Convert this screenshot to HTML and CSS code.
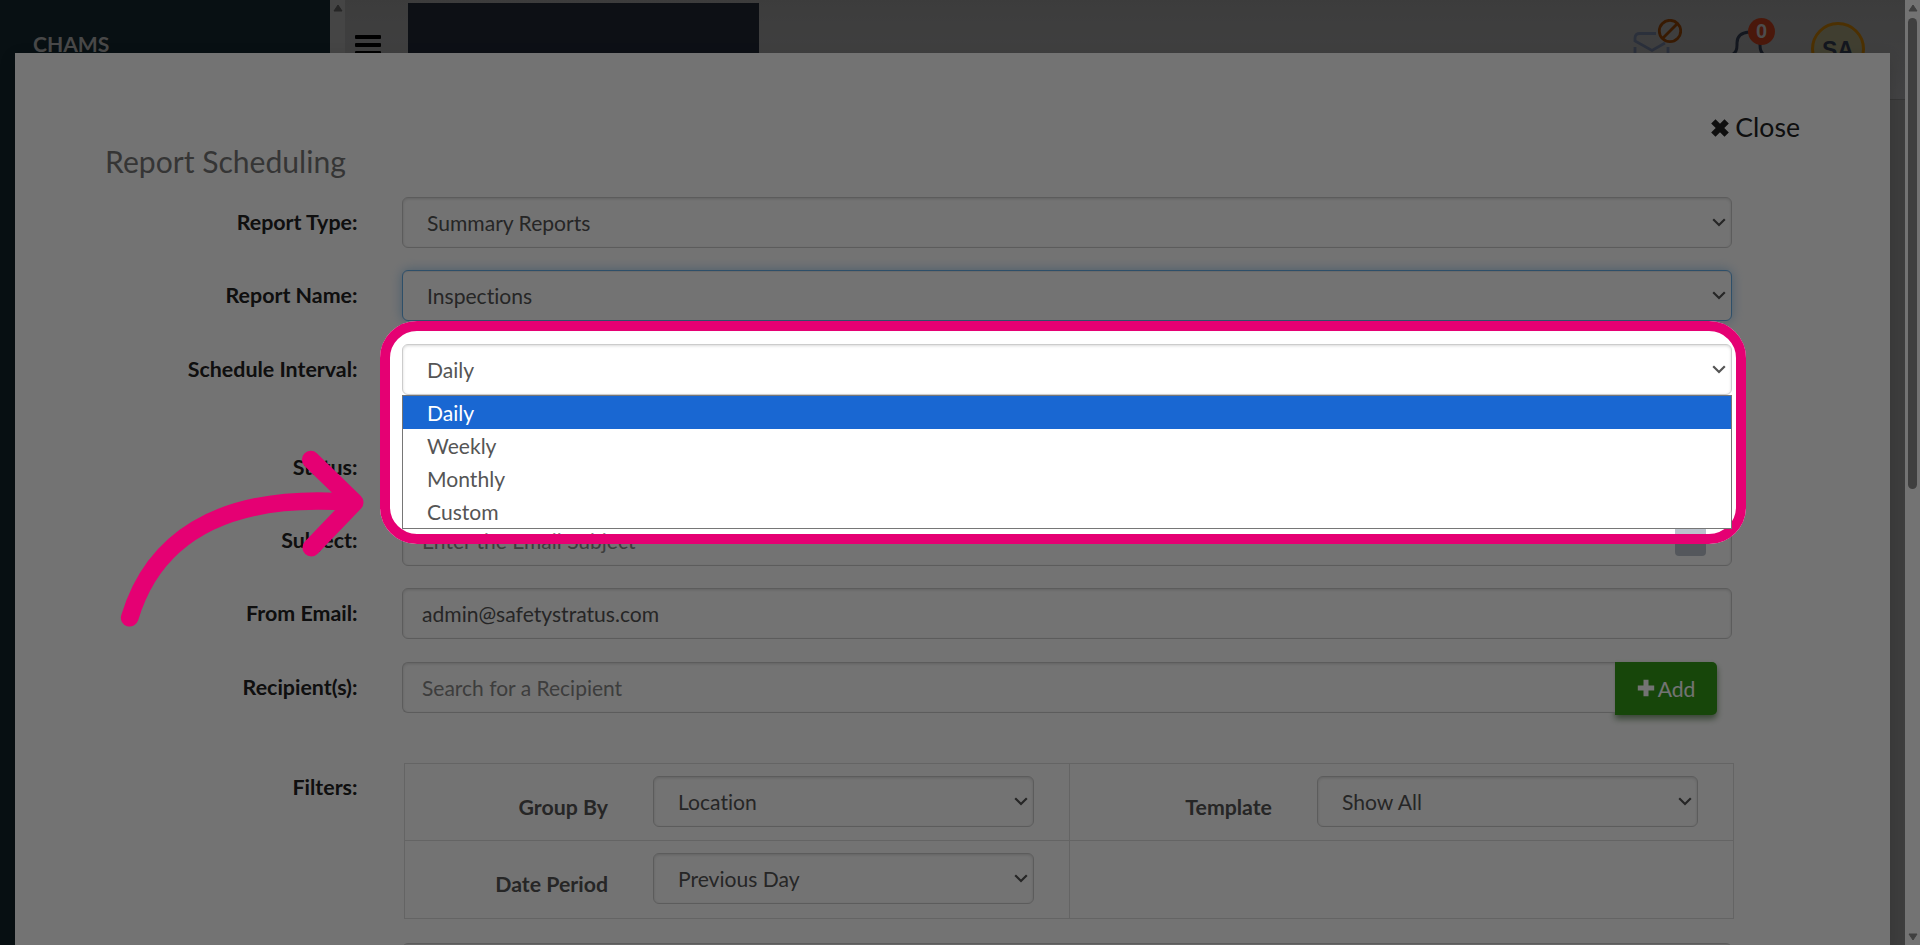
FILE: index.html
```
<!DOCTYPE html>
<html lang="en">
<head>
    <meta charset="UTF-8">
    <meta name="viewport" content="width=device-width, initial-scale=1.0">
    <title>Report Scheduling</title>
    <link rel="stylesheet" href="styles.css">
</head>
<body>
    <div class="page">
        <div class="sidebar">CHAMS</div>
        <div class="side-scroll">
            <svg class="scroll-arrow" viewBox="0 0 10 8"><path d="M5 1L9 7H1Z" /></svg>
        </div>
        <div class="topbar">
            <div class="menu-icon"><span></span><span></span><span></span></div>
            <div class="logo"></div>
            <div class="top-icons">
                <svg class="icon-mail" viewBox="0 0 50 50" fill="none">
                    <path d="M24 14.5H8Q3 14.5 3 19V22L20 31.5L33 24M3 28V45M36 28V45" stroke="#5f6a84" stroke-width="2.8" />
                    <circle cx="38" cy="12" r="10.7" stroke="#7d3a06" stroke-width="2.8" />
                    <path d="M30.5 19.5L45.5 4.5" stroke="#7d3a06" stroke-width="2.8" />
                </svg>
                <div class="bell">
                    <svg viewBox="0 0 36 40" fill="none">
                        <path d="M2 35Q6 33 6 26V24Q6 14 18 13Q28 14 29 24V26Q29 33 33 36" stroke="#2b3345" stroke-width="3" />
                    </svg>
                    <span class="badge">0</span>
                </div>
                <div class="avatar">SA</div>
            </div>
        </div>
        <div class="page-scroll">
            <svg class="scroll-arrow" viewBox="0 0 10 8"><path d="M5 1L9 7H1Z" /></svg>
            <div class="thumb"></div>
            <svg class="scroll-arrow" viewBox="0 0 10 8"><path d="M5 7L9 1H1Z" /></svg>
        </div>
    </div>

    <div class="modal">
        <div class="close">
            <svg class="icon-x" viewBox="0 0 18 18"><path d="M3 3L15 15M15 3L3 15" /></svg>
            Close
        </div>
        <h1 class="title">Report Scheduling</h1>

        <div class="row">
            <label class="label">Report Type:</label>
            <div class="field select">Summary Reports<svg class="chevron" viewBox="0 0 14 9"><path d="M1.2 1.2L7 7L12.8 1.2" /></svg></div>
        </div>
        <div class="row">
            <label class="label">Report Name:</label>
            <div class="field select focused">Inspections<svg class="chevron" viewBox="0 0 14 9"><path d="M1.2 1.2L7 7L12.8 1.2" /></svg></div>
        </div>
        <div class="row row-interval">
            <label class="label">Schedule Interval:</label>
            <div class="field select">Daily<svg class="chevron" viewBox="0 0 14 9"><path d="M1.2 1.2L7 7L12.8 1.2" /></svg>
                <ul class="options">
                    <li class="active">Daily</li>
                    <li>Weekly</li>
                    <li>Monthly</li>
                    <li>Custom</li>
                </ul>
            </div>
        </div>
        <div class="row">
            <label class="label">Status:</label>
        </div>
        <div class="row">
            <label class="label">Subject:</label>
            <div class="field placeholder">Enter the Email Subject<span class="field-button"></span></div>
        </div>
        <div class="row">
            <label class="label">From Email:</label>
            <div class="field">admin@safetystratus.com</div>
        </div>
        <div class="row row-recipients">
            <label class="label">Recipient(s):</label>
            <div class="field placeholder recipient">Search for a Recipient</div>
            <div class="add-btn">
                <svg class="icon-plus" viewBox="0 0 18 18"><path d="M9 0.8V17.2M0.8 9H17.2" /></svg>
                Add
            </div>
        </div>
        <div class="row row-filters">
            <label class="label">Filters:</label>
            <div class="filters">
                <div class="cell">
                    <label class="filter-label">Group By</label>
                    <div class="field select">Location<svg class="chevron" viewBox="0 0 14 9"><path d="M1.2 1.2L7 7L12.8 1.2" /></svg></div>
                </div>
                <div class="cell cell-right">
                    <label class="filter-label">Template</label>
                    <div class="field select">Show All<svg class="chevron" viewBox="0 0 14 9"><path d="M1.2 1.2L7 7L12.8 1.2" /></svg></div>
                </div>
                <div class="cell">
                    <label class="filter-label">Date Period</label>
                    <div class="field select">Previous Day<svg class="chevron" viewBox="0 0 14 9"><path d="M1.2 1.2L7 7L12.8 1.2" /></svg></div>
                </div>
                <div class="cell cell-right"></div>
            </div>
        </div>
        <div class="row row-last">
            <div class="field"></div>
        </div>
    </div>

    <!-- highlight and arrow over the dimmed page -->
    <div class="spotlight"></div>
    <svg class="arrow" viewBox="0 0 260 190">
        <path d="M19.7 172.7C41 102 101 46 244 57.5M200.7 14.7L244.7 57.3L201.3 102.7" />
    </svg>
</body>
</html>
```
FILE: styles.css
```
* {
    box-sizing: border-box;
}

body {
    margin: 0;
    height: 945px;
    overflow: hidden;
    position: relative;
    font-family: "Lato", sans-serif;
    font-size: 21.1px;
    font-variant-ligatures: none;
    color: #555;
}

.page {
    display: flex;
    height: 945px;
    background: #888;
}

.sidebar {
    width: 330px;
    padding: 31px 0 0 33px;
    background: #12242a;
    color: #a0a0a0;
    font-weight: bold;
    line-height: 26px;
}

.side-scroll {
    width: 15px;
    padding-top: 4px;
    background: #999;
    text-align: center;
    line-height: 0;
}

.scroll-arrow {
    width: 10px;
    height: 8px;
    fill: #555;
    stroke: #555;
    stroke-linejoin: round;
    stroke-width: 1;
}

.topbar {
    flex: 1;
    height: 100px;
    display: flex;
    background: linear-gradient(#868686, #939395);
    border-bottom: 1px solid #777;
}

.menu-icon {
    width: 26px;
    margin: 35px 27px 0 10px;
}

.menu-icon span {
    display: block;
    height: 4px;
    margin-bottom: 4px;
    border-radius: 1px;
    background: #000;
}

.logo {
    width: 351px;
    margin-top: 3px;
    background: #1d2430;
}

.top-icons {
    display: flex;
    align-items: flex-start;
    margin-left: auto;
    padding-right: 40px;
}

.icon-mail {
    width: 50px;
    height: 50px;
    margin: 19px 49px 0 0;
}

.bell {
    position: relative;
    width: 45px;
    margin: 19px 35px 0 0;
}

.bell svg {
    width: 36px;
    height: 40px;
}

.badge {
    position: absolute;
    top: -1px;
    left: 17px;
    width: 27px;
    height: 27px;
    border-radius: 50%;
    background: #a5371a;
    color: #aaa;
    font: bold 20px/27px "Liberation Sans", sans-serif;
    text-align: center;
}

.avatar {
    width: 54px;
    height: 54px;
    margin-top: 22px;
    border: 3px solid #a86c05;
    border-radius: 50%;
    background: #8f8b6c;
    color: #2b3345;
    font: bold 23px/50px "Liberation Sans", sans-serif;
    text-align: center;
}

.page-scroll {
    width: 15px;
    padding: 4px 0;
    display: flex;
    flex-direction: column;
    align-items: center;
    background: #fff;
}

.page-scroll .scroll-arrow {
    fill: #8c8c8c;
    stroke: #8c8c8c;
}

.thumb {
    width: 9px;
    height: 471px;
    margin: 6px 0 auto;
    border-radius: 5px;
    background: #8c8c8c;
}

.modal {
    position: absolute;
    top: 53px;
    left: 15px;
    width: 1875px;
    height: 892px;
    overflow: hidden;
    background: #fff;
    box-shadow: 0 5px 15px rgba(0, 0, 0, 0.15);
}

.close {
    display: flex;
    align-items: center;
    justify-content: flex-end;
    gap: 5px;
    height: 36px;
    margin: 56px 90px 1px 0;
    font-size: 26.6px;
    color: #222;
}

.icon-x {
    width: 20px;
    height: 20px;
    margin-top: 2px;
    fill: none;
    stroke: #222;
    stroke-width: 5.5;
}

.title {
    height: 51px;
    margin: -3px 0 0 90px;
    font-size: 30.1px;
    font-weight: normal;
    line-height: 36px;
    color: #777;
}

.row {
    display: flex;
    height: 51px;
    margin: 3px 0 22.4px;
}

.row + .row {
    margin-top: 0;
}

.row-interval {
    margin-bottom: 46.8px;
}

.label {
    width: 342.5px;
    margin-right: 44.5px;
    font-size: 21.4px;
    line-height: 50px;
    text-align: right;
    font-weight: bold;
    color: #222;
}

.field {
    position: relative;
    width: 1330px;
    height: 51px;
    padding: 0 19px;
    border: 1px solid #ccc;
    border-radius: 6px;
    background: #fff;
    box-shadow: inset 0 1px 3px rgba(0, 0, 0, 0.15);
    line-height: 49px;
}

.select {
    padding-left: 24px;
}

.placeholder {
    color: #888;
    font-size: 21px;
}

.focused {
    border-color: #66afe9;
    box-shadow: inset 0 1px 1px rgba(0, 0, 0, 0.075), 0 0 12px rgba(102, 175, 233, 0.6);
}

.chevron {
    position: absolute;
    top: 20px;
    right: 5px;
    width: 14px;
    height: 9px;
    fill: none;
    stroke: #555;
    stroke-width: 2.2;
}

.options {
    position: absolute;
    top: 50px;
    left: -1px;
    z-index: 2;
    width: 1330px;
    margin: 0;
    padding: 0;
    border: 1px solid #767676;
    background: #fff;
    list-style: none;
}

.options li {
    height: 33px;
    padding-left: 24px;
    line-height: 34px;
}

.options .active {
    background: #1967d2;
    color: #fff;
}

.field-button {
    position: absolute;
    right: 25px;
    bottom: 9px;
    width: 31px;
    height: 31px;
    border-radius: 4px;
    background: #bbc2cc;
}

.recipient {
    width: 1213px;
    border-right: 0;
    border-radius: 6px 0 0 6px;
}

.add-btn {
    display: flex;
    align-items: center;
    justify-content: center;
    gap: 3px;
    width: 102px;
    height: 53px;
    border-radius: 0 5px 5px 0;
    background: #339c18;
    box-shadow: 0 4px 6px rgba(40, 90, 30, 0.6);
    color: #fff;
}

.icon-plus {
    width: 18px;
    height: 18px;
    fill: none;
    stroke: #fff;
    stroke-width: 5;
}

.row-recipients {
    margin-bottom: 50px;
}

.row-filters {
    height: 156px;
    margin-bottom: 24px;
}

.row-filters .label {
    line-height: 48px;
}

.filters {
    display: grid;
    grid-template-columns: 665px 664px;
    grid-template-rows: 77px 78px;
    margin-left: 2px;
    width: 1330px;
    border: solid #ddd;
    border-width: 1px 0 0 1px;
}

.cell {
    display: flex;
    padding-top: 12px;
    border: solid #ddd;
    border-width: 0 1px 1px 0;
}

.filter-label {
    width: 203px;
    margin-right: 45px;
    padding-top: 6px;
    font-size: 21.3px;
    line-height: 50px;
    text-align: right;
    font-weight: bold;
}

.cell-right .filter-label {
    width: 202px;
}

.cell .field {
    width: 381px;
}

.row-last {
    margin: 0 0 0 387px;
}

.spotlight {
    position: absolute;
    top: 321px;
    left: 380px;
    width: 1366px;
    height: 223px;
    border: 10.5px solid #e50073;
    border-radius: 37px;
    box-shadow: 0 0 0 2000px rgba(0, 0, 0, 0.55);
}

.arrow {
    position: absolute;
    top: 445px;
    left: 110px;
    width: 260px;
    height: 190px;
    fill: none;
    stroke: #e50073;
    stroke-width: 17.7;
    stroke-linecap: round;
    stroke-linejoin: round;
}
```
